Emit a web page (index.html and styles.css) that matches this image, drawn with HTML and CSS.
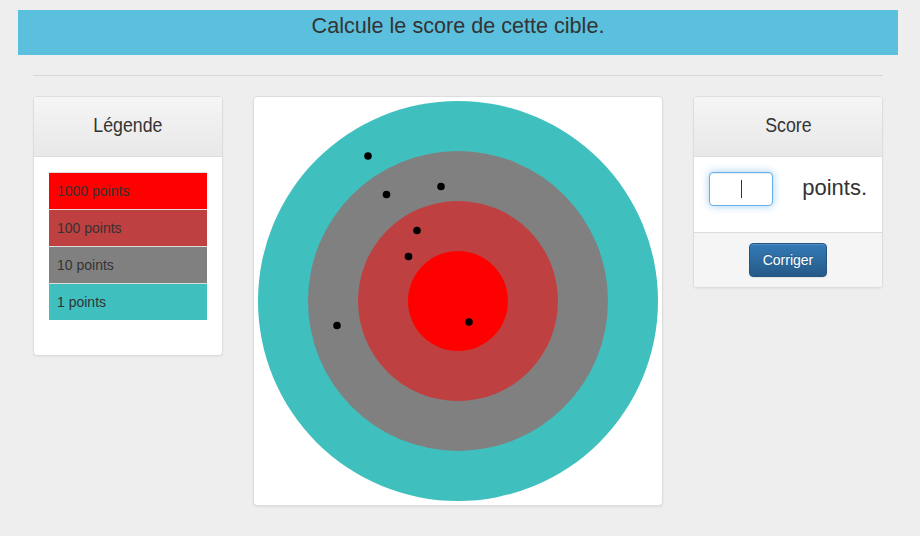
FILE: index.html
```html
<!DOCTYPE html>
<html lang="fr">
<head>
<meta charset="utf-8">
<title>Cible</title>
<link rel="stylesheet" href="styles.css">
</head>
<body>
<div class="page">
  <div class="banner">Calcule le score de cette cible.</div>
  <div class="rule-wrap"><hr class="rule"></div>
  <div class="row">
    <div class="col col-side">
      <div class="panel">
        <div class="panel-heading"><h3 class="panel-title">Légende</h3></div>
        <div class="panel-body legend-body">
          <table class="legend">
            <tr class="c-red"><td>1000 points</td></tr>
            <tr class="c-brown"><td>100 points</td></tr>
            <tr class="c-gray"><td>10 points</td></tr>
            <tr class="c-teal"><td>1 points</td></tr>
          </table>
        </div>
      </div>
    </div>
    <div class="col col-main">
      <div class="thumbnail">
        <svg class="target" width="400" height="400" viewBox="0 0 400 400">
          <circle cx="200" cy="200" r="200" fill="#40bfbf"/>
          <circle cx="200" cy="200" r="150" fill="#808080"/>
          <circle cx="200" cy="200" r="100" fill="#bf4040"/>
          <circle cx="200" cy="200" r="50" fill="#ff0000"/>
          <g fill="#000">
            <circle cx="110" cy="55" r="3.8"/>
            <circle cx="128.5" cy="93.5" r="3.8"/>
            <circle cx="183" cy="85.5" r="3.8"/>
            <circle cx="159" cy="129.5" r="3.8"/>
            <circle cx="150.5" cy="155.5" r="3.8"/>
            <circle cx="79" cy="224.5" r="3.8"/>
            <circle cx="211" cy="221" r="3.8"/>
          </g>
        </svg>
      </div>
    </div>
    <div class="col col-side">
      <div class="panel">
        <div class="panel-heading"><h3 class="panel-title">Score</h3></div>
        <div class="panel-body score-body">
          <div class="fake-input"><span class="caret"></span></div>
          <span class="points-label">points.</span>
        </div>
        <div class="panel-footer">
          <button class="btn-primary" type="button">Corriger</button>
        </div>
      </div>
    </div>
  </div>
</div>
</body>
</html>
```
FILE: styles.css
```css
* { box-sizing: border-box; }
html, body { margin: 0; padding: 0; }
body {
  background: #eeeeee;
  font-family: "Liberation Sans", Arial, sans-serif;
  font-size: 14px;
  line-height: 1.42857;
  color: #333333;
  width: 920px;
  height: 536px;
  overflow: hidden;
}
.page {
  padding: 10px 22px 0 18px;
}
.banner {
  height: 45px;
  background: #5bc0de;
  text-align: center;
  font-size: 21.6px;
  line-height: 22px;
  padding-top: 5px;
  color: #333333;
}
.rule-wrap {
  padding: 0 15px;
}
.rule {
  margin: 20px 0 20px;
  border: 0;
  border-top: 1px solid #d6d6d6;
  height: 0;
}
.row {
  display: flex;
  align-items: flex-start;
}
.col { padding: 0 15px; }
.col-side { width: 220px; }
.col-main { width: 440px; }

.panel {
  background: #ffffff;
  border: 1px solid #dddddd;
  border-radius: 4px;
  box-shadow: 0 1px 2px rgba(0,0,0,0.05);
  overflow: hidden;
}
.panel-heading {
  height: 60px;
  background: linear-gradient(to bottom, #f5f5f5 0%, #e8e8e8 100%);
  border-bottom: 1px solid #dddddd;
  display: flex;
  align-items: center;
  justify-content: center;
}
.panel-title {
  margin: 0;
  display: inline-block;
  font-weight: normal;
  font-size: 21px;
  line-height: 24px;
  padding-bottom: 3px;
  color: #333333;
  transform: scaleX(0.845);
}
.legend-body {
  padding: 15px 15px 35px;
}
.legend {
  width: 100%;
  border-collapse: collapse;
  border-spacing: 0;
}
.legend td {
  padding: 8px 8px;
  line-height: 20px;
  border-top: 1px solid #dddddd;
  color: #333333;
}
.c-red td { background: #ff0000; }
.c-brown td { background: #bf4040; }
.c-gray td { background: #808080; }
.c-teal td { background: #40bfbf; }

.thumbnail {
  background: #ffffff;
  border: 1px solid #dddddd;
  border-radius: 4px;
  padding: 4px;
  box-shadow: 0 1px 2px rgba(0,0,0,0.075);
  line-height: 0;
}
.target { display: block; }

.score-body {
  padding: 15px 15px 26px;
  display: flex;
  align-items: center;
  justify-content: space-between;
}
.fake-input {
  width: 64px;
  height: 34px;
  border: 1px solid #66afe9;
  border-radius: 4px;
  background: #ffffff;
  box-shadow: inset 0 1px 1px rgba(0,0,0,0.075), 0 0 8px rgba(102,175,233,0.6);
  display: flex;
  align-items: center;
  justify-content: center;
}
.caret {
  display: block;
  width: 1px;
  height: 18px;
  background: #333333;
}
.points-label {
  font-size: 22px;
  line-height: 24px;
  padding-bottom: 3px;
  color: #333333;
}
.panel-footer {
  background: #f5f5f5;
  border-top: 1px solid #dddddd;
  padding: 10px 15px;
  display: flex;
  justify-content: center;
}
.btn-primary {
  font-family: "Liberation Sans", Arial, sans-serif;
  font-size: 14px;
  line-height: 20px;
  height: 34px;
  padding: 6px 13px;
  color: #ffffff;
  border: 1px solid #245580;
  border-radius: 4px;
  background: linear-gradient(to bottom, #337ab7 0%, #265a88 100%);
  text-shadow: 0 -1px 0 rgba(0,0,0,0.2);
  box-shadow: inset 0 1px 0 rgba(255,255,255,0.15), 0 1px 1px rgba(0,0,0,0.075);
  cursor: pointer;
}
```
